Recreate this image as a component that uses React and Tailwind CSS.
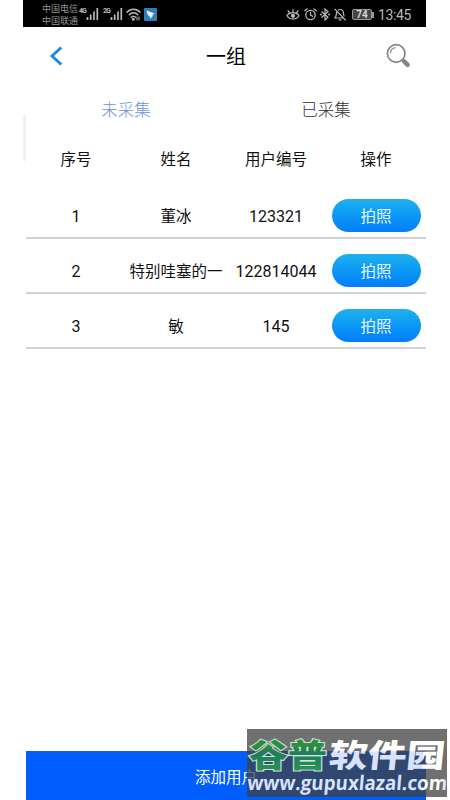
import React, { useState } from 'react';

const users = [
  { id: 1, name: '董冰', code: '123321' },
  { id: 2, name: '特别哇塞的一', code: '122814044' },
  { id: 3, name: '敏', code: '145' },
];

function Signal() {
  return (
    <svg className="w-[14px] h-[13px]" viewBox="0 0 14 13" stroke="#b9b9b9" strokeWidth="1.7">
      <path d="M1.5 13v-3M4.7 13V7.5M8 13V4.5M11.3 13V1" />
    </svg>
  );
}

function StatusBar() {
  return (
    <div className="ml-[23px] w-[403px] h-[27px] bg-black flex items-start text-[#b9b9b9]">
      <div className="ml-[19px] mt-[3px] w-[36px] text-[9px] leading-[12px] text-[#969696] whitespace-nowrap">
        <p>中国电信</p>
        <p>中国联通</p>
      </div>
      <div className="flex mt-[7px] ml-px w-[24px]">
        <span className="text-[7px] leading-[9px] font-bold w-[6px] tracking-[-1px]">4G</span>
        <span className="ml-px"><Signal /></span>
      </div>
      <div className="flex mt-[7px] w-[23px]">
        <span className="text-[7px] leading-[9px] font-bold w-[6px] tracking-[-1px]">2G</span>
        <span className="ml-px"><Signal /></span>
      </div>
      <svg className="mt-[8px] w-[15px] h-[13px]" viewBox="0 0 15 13" fill="none" stroke="#b9b9b9" strokeWidth="1.4" strokeLinecap="round">
        <path d="M1 4.2C4.5 .3 10.5 .3 14 4.2M3.2 6.8c2.4-2.7 6.2-2.7 8.6 0M5.2 9.3c1.2-1.3 3.2-1.3 4.4 0" />
        <circle cx="7.3" cy="11.2" r=".8" fill="#b9b9b9" />
        <path d="M11 9v3M13 9v3" strokeWidth="1" />
      </svg>
      <svg className="ml-[3px] mt-[8px] w-[13px] h-[13px]" viewBox="0 0 13 13">
        <rect width="13" height="13" rx="1" fill="#2f80b8" />
        <path d="M2.5 2.5l8 3-2 1.300 .300 1.200-2.500 2.800-.500-2C4 7.500 3 5.300 2.500 2.500z" fill="#f1f7fa" />
      </svg>
      <div className="ml-auto mt-[7px] flex items-center h-[15px]">
        <svg className="w-[14px] h-[13px] mr-[4px]" viewBox="0 0 14 13" fill="none" stroke="#b9b9b9" strokeWidth="1.200" strokeLinecap="round">
          <path d="M1 7.500C3.500 3.600 10.500 3.600 13 7.500C10.500 12.200 3.500 12.200 1 7.500zM7 4V1.500M3.500 4.800L2 2.700M10.500 4.800L12 2.700" />
          <circle cx="7" cy="7.800" r="1.500" fill="#b9b9b9" />
        </svg>
        <svg className="w-[13px] h-[13px] mr-[3px]" viewBox="0 0 13 13" fill="none" stroke="#b9b9b9" strokeWidth="1.3" strokeLinecap="round">
          <circle cx="6.500" cy="7" r="4.700" />
          <path d="M6.500 4.300V7l2 1.300M.8 2.700L3 .9M12.200 2.700L10 .9" />
        </svg>
        <svg className="w-[10px] h-[13px] mr-[4px]" viewBox="0 0 10 13" fill="none" stroke="#b9b9b9" strokeWidth="1.200">
          <path d="M1.500 3.500l6.500 5.700L5 12V1l3 2.800L1.500 9.500" />
          <circle cx="1" cy="6.500" r=".4" />
          <circle cx="9" cy="6.500" r=".4" />
        </svg>
        <svg className="w-[12px] h-[13px] mr-[6px]" viewBox="0 0 12 13" fill="none" stroke="#b9b9b9" strokeWidth="1.200">
          <path d="M3 3.500C1.800 6 2.800 8 1 10h8.500M4 2.500c2-2 5.200-.7 5.400 2 .1 2 .1 3 .9 4M4.800 11.800h2.500M.6.800l11 11.500" />
        </svg>
        <div className="w-[20px] h-[11px] rounded-[2px] border border-[#999] bg-[#444] text-[10px] leading-[10px] font-bold text-center text-[#d5d5d5]">74</div>
        <div className="w-[2px] h-[6px] bg-[#999] mr-[4px]" />
        <span className="w-[33px] mr-[15px] pt-px text-[14px] leading-[15px] tracking-[-0.4px] whitespace-nowrap">13:45</span>
      </div>
    </div>
  );
}

function Header() {
  return (
    <header className="h-[59px] grid grid-cols-[60px_1fr_60px] items-center">
      <button className="justify-self-center">
        <svg className="w-[14px] h-[20px] -mt-[2px]" viewBox="0 0 14 20" fill="none" stroke="#198ce6" strokeWidth="3">
          <path d="M12.300 1.500L3 10l9.300 8.500" />
        </svg>
      </button>
      <h1 className="text-center text-[20px] leading-[24px] text-black">一组</h1>
      <button className="ml-[20px]">
        <svg className="w-[25px] h-[25px] -mt-[2px]" viewBox="0 0 25 25" fill="none" stroke="#858585">
          <circle cx="10.200" cy="10.500" r="8.800" strokeWidth="1.700" />
          <path d="M4.500 10.200c.2-3 2-5 4.900-5.500" strokeWidth="1.200" />
          <path d="M16.300 16.500l2 2" strokeWidth="2" />
          <path d="M18.200 18.400l3.400 3.400" strokeWidth="4.500" strokeLinecap="round" />
        </svg>
      </button>
    </header>
  );
}

function Watermark() {
  return (
    <div className="absolute left-[247px] top-[729px] w-[200px] h-[68px] bg-[#404040]/75 overflow-hidden">
      <svg className="block w-[200px] h-[68px]" viewBox="0 0 200 68">
        <defs>
          {/* lettering is tinted where it crosses the blue footer */}
          <pattern id="tint" patternUnits="userSpaceOnUse" width="200" height="68">
            <rect width="200" height="68" fill="#fff" />
            <rect y="22" width="179" height="46" fill="#d8e3ff" />
          </pattern>
          <linearGradient id="green" x1="0" y1="0" x2="0" y2="1">
            <stop offset="0.35" stopColor="#2c8f3c" />
            <stop offset="0.5" stopColor="#1d7d5c" />
            <stop offset="1" stopColor="#2c9a50" />
          </linearGradient>
        </defs>
        <g fontFamily="'Noto Sans CJK SC', sans-serif" fontWeight="900" fontSize="32">
          <text x="2" y="38" textLength="78" lengthAdjust="spacingAndGlyphs" fill="url(#green)" stroke="#cfe0dd" strokeWidth="2" paintOrder="stroke">谷普</text>
          <text x="85" y="38" textLength="116" lengthAdjust="spacingAndGlyphs" fill="url(#tint)" transform="skewX(-6)">软件园</text>
        </g>
        <text x="5" y="61" textLength="200" lengthAdjust="spacingAndGlyphs" fontFamily="'Open Sans', sans-serif" fontWeight="700" fontSize="20" fill="url(#tint)" transform="skewX(-5)">www.gupuxlazal.com</text>
      </svg>
    </div>
  );
}

export default function App() {
  const [tab, setTab] = useState('pending');

  return (
    <div className="relative w-[450px] h-[800px] overflow-hidden bg-white flex flex-col font-[Roboto,'Noto_Sans_CJK_SC',sans-serif]">
      <StatusBar />
      <div className="flex-1 ml-[26px] w-[400px] flex flex-col">
        <Header />

        {/* Tabs */}
        <nav className="h-[46px] pt-[4px] grid grid-cols-2 text-[16.500px] font-light">
          <button
            onClick={() => setTab('pending')}
            className={tab === 'pending' ? 'text-[#6d93d6]' : 'text-[#303030]'}
          >
            未采集
          </button>
          <button
            onClick={() => setTab('done')}
            className={tab === 'done' ? 'text-[#6d93d6]' : 'text-[#303030]'}
          >
            已采集
          </button>
        </nav>

        {/* User list */}
        <div className="h-[52px] pt-[6px] grid grid-cols-4 items-center text-center text-[15.500px] text-[#111]">
          <span>序号</span>
          <span>姓名</span>
          <span>用户编号</span>
          <span>操作</span>
        </div>
        {users.map((user) => (
          <div
            key={user.id}
            className="h-[55px] pt-[9px] border-b-2 border-[#d3d3d3] grid grid-cols-4 items-center text-center text-[15.500px] text-[#111] whitespace-nowrap"
          >
            <span className="pt-[4px] text-[16px]">{user.id}</span>
            <span className="pt-[6px]">{user.name}</span>
            <span className="pt-[4px] text-[16px]">{user.code}</span>
            <button className="justify-self-center w-[89px] h-[33px] pt-[6px] rounded-full bg-linear-to-b from-[#20b1ed] to-[#087cfb] text-[#e9f6ff]">
              拍照
            </button>
          </div>
        ))}

        <button className="mt-auto h-[49px] pt-[5px] bg-[#005eff] border-t border-[#1762bc] text-[15.500px] text-white">
          添加用户
        </button>
      </div>

      <div className="absolute left-[23px] top-[115px] w-[3px] h-[46px] bg-[#f1f1f3]" />
      <Watermark />
    </div>
  );
}
